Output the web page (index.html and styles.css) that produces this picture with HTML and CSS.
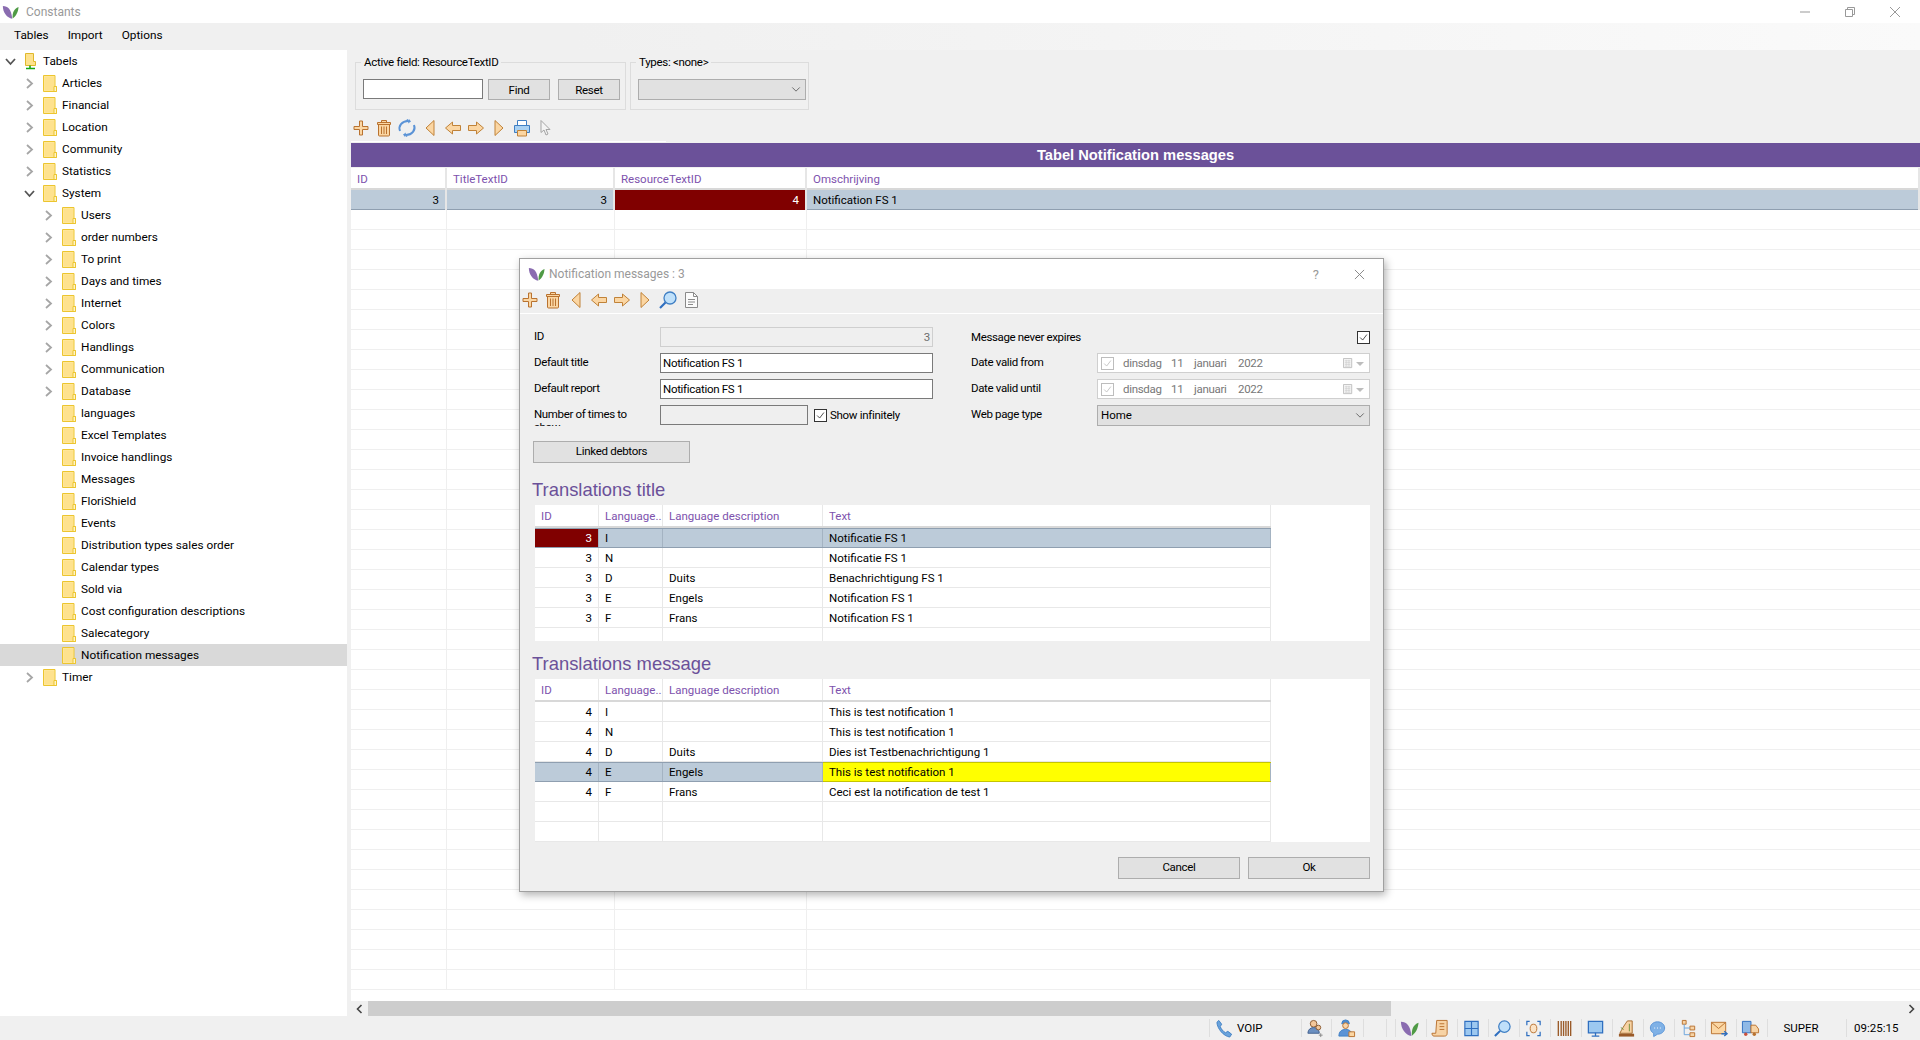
FILE: index.html
```html
<!DOCTYPE html>
<html lang="en">
<head>
    <meta charset="UTF-8">
    <title>Constants</title>
    <link rel="stylesheet" href="styles.css">
</head>
<body>
    <!-- icon sheet -->
    <svg class="sprite" width="0" height="0">
        <symbol id="leaf" viewBox="0 0 20 16">
            <path d="M1 1c6 0 10 4 11 15C6 15 1 9 1 1z" fill="#8a6cb0"/>
            <path d="M19.500 2c-.5 6-3 11-7 13.500C12 9 14 4 19.500 2z" fill="#4f9a45"/>
        </symbol>
        <symbol id="folder" viewBox="0 0 14 17">
            <path d="M.5.5h11.5v11h1.5v5H.5z" fill="#ffe9a0" stroke="#ecc52f"/>
            <path d="M1.5 1.5h9.5v14H1.5z" fill="#fee28e"/>
            <path d="M11 11.5h2.5v5H11z" fill="#fff4c8" stroke="#ecc52f"/>
        </symbol>
        <symbol id="root" viewBox="0 0 11 17">
            <path d="M.5.5h8v8h2v4H.5z" fill="#fee28e" stroke="#e0b92c"/>
            <path d="M5 12.5V15M1 15.5h9" stroke="#16a716" stroke-width="1.6" fill="none"/>
        </symbol>
        <symbol id="chev-r" viewBox="0 0 13 13">
            <path d="M4 2l5 4.5L4 11" fill="none" stroke="#a6a6a6" stroke-width="1.8"/>
        </symbol>
        <symbol id="chev-d" viewBox="0 0 13 13">
            <path d="M2 4l4.500 5L11 4" fill="none" stroke="#555" stroke-width="1.8"/>
        </symbol>
        <symbol id="plus" viewBox="0 0 20 20">
            <path d="M8.500 3h3v5.500H17v3h-5.500V17h-3v-5.500H3v-3h5.500z" fill="#fbd6a3" stroke="#b9722f"/>
        </symbol>
        <symbol id="trash" viewBox="0 0 20 20">
            <path d="M7.500 4V2.500h5V4M3.500 4.500h13v2h-13zM4.500 6.500h11V17a1 1 0 0 1-1 1h-9a1 1 0 0 1-1-1z" fill="#fbd6a3" stroke="#b9722f"/>
            <path d="M7.500 8.500V16M10 8.500V16M12.500 8.500V16" stroke="#b9722f"/>
        </symbol>
        <symbol id="tri-l" viewBox="0 0 20 20">
            <path d="M14 2.500v15L6 10z" fill="#fbd6a3" stroke="#c08238"/>
        </symbol>
        <symbol id="tri-r" viewBox="0 0 20 20">
            <path d="M6 2.500v15l8-7.500z" fill="#fbd6a3" stroke="#c08238"/>
        </symbol>
        <symbol id="arrow-l" viewBox="0 0 20 20">
            <path d="M2.500 10L9.500 4v3.500h8v5h-8V16z" fill="#fbd6a3" stroke="#c08238"/>
        </symbol>
        <symbol id="arrow-r" viewBox="0 0 20 20">
            <path d="M17.500 10l-7-6v3.500h-8v5h8V16z" fill="#fbd6a3" stroke="#c08238"/>
        </symbol>
        <symbol id="refresh" viewBox="0 0 20 20">
            <path d="M3 13C1 8 5 3 11 3l-1-1.500M17 7c2 5-2 10-8 10l1 1.500" fill="none" stroke="#5b93d6" stroke-width="2"/>
            <path d="M12 1l2 2.500-3 2zM8 19l-2-2.500 3-2z" fill="#5b93d6"/>
        </symbol>
        <symbol id="print" viewBox="0 0 20 20">
            <path d="M5.500 2.500h9v5h-9z" fill="#fff" stroke="#3f7fc4"/>
            <path d="M2.500 7.500h15v7h-15z" fill="#a9d1f3" stroke="#3f7fc4"/>
            <path d="M5.500 12.500h9v5.500h-9z" fill="#fbd6a3" stroke="#c08238"/>
        </symbol>
        <symbol id="cursor" viewBox="0 0 20 20">
            <path d="M6 2.500v12l3-2.500 2 5 2-1-2-4.500h4z" fill="#f4f4f4" stroke="#a5a5a5"/>
        </symbol>
        <symbol id="mag" viewBox="0 0 20 20">
            <circle cx="12" cy="8" r="6" fill="#bfe0fa" stroke="#3f7fc4" stroke-width="1.300"/>
            <path d="M7.500 12.500L2 18" stroke="#2f6fc0" stroke-width="2.200"/>
        </symbol>
        <symbol id="doc" viewBox="0 0 20 20">
            <path d="M4.500 2.500h8l4 4v11h-12z" fill="#fbfbfb" stroke="#8a8a8a"/>
            <path d="M12.500 2.500v4h4M7 9.500h7M7 12h7M7 14.500h5" fill="none" stroke="#8a8a8a"/>
        </symbol>
        <symbol id="phone" viewBox="0 0 20 20">
            <path d="M4 1.500l3 4-1.500 2.500c1 2.500 3 5 5.500 6.500l2.500-1.500 4 3-2 3C9 18 2.500 10.500 2 3.500z" fill="#6aa3dc" stroke="#3f7fc4"/>
        </symbol>
        <symbol id="users" viewBox="0 0 20 20">
            <circle cx="8" cy="5" r="3.500" fill="#f3c79a" stroke="#8a5a30"/>
            <path d="M2 15c0-4 3-6 6-6s6 2 6 6z" fill="#6b8fc0" stroke="#44628f"/>
            <circle cx="13" cy="9" r="2.500" fill="#f3c79a" stroke="#8a5a30"/>
            <path d="M15.500 15v4M13.500 17h4" stroke="#888"/>
        </symbol>
        <symbol id="worker" viewBox="0 0 20 20">
            <path d="M5 5a4 4 0 0 1 8 0z" fill="#4f8bcc" stroke="#3f7fc4"/>
            <circle cx="9" cy="7" r="3" fill="#f7d5ab" stroke="#b9722f"/>
            <path d="M2 18c0-5 3-7 7-7s7 2 7 7z" fill="#5b93d6" stroke="#3f7fc4"/>
            <path d="M12.500 13.500h6v5h-6z" fill="#fbd6a3" stroke="#b9722f"/>
        </symbol>
        <symbol id="scroll" viewBox="0 0 20 20">
            <path d="M6 1.500h11V15c0 2-1 3-3 3H3c-1.500 0-2-2-2-3h4z" fill="#f7d3a5" stroke="#b9722f"/>
            <path d="M9 5h5M9 8h5M9 11h5" stroke="#b9722f"/>
        </symbol>
        <symbol id="grid" viewBox="0 0 20 20">
            <path d="M3 2.500h14v15H3z" fill="#9cc8f0" stroke="#2f6fc0" stroke-width="1.200"/>
            <path d="M10 2.500v15M3 10h14" stroke="#2f6fc0" stroke-width="1.200"/>
        </symbol>
        <symbol id="face" viewBox="0 0 20 20">
            <path d="M6 2.500H3v4M14 2.500h3v4M3 13.500v4h3M17 13.500v4h-3" fill="none" stroke="#2f6fc0" stroke-width="1.300"/>
            <ellipse cx="10" cy="10" rx="3.500" ry="4.500" fill="#fbe3c6" stroke="#b9722f"/>
        </symbol>
        <symbol id="barcode" viewBox="0 0 20 20">
            <path d="M3.500 2v16M6.500 2v16M9 2v16M11.500 2v16M14 2v16M16.500 2v16" stroke="#9a5a28" stroke-width="1.400"/>
        </symbol>
        <symbol id="monitor" viewBox="0 0 20 20">
            <path d="M2.500 2.500h15v12h-15z" fill="#9cc8f0" stroke="#2f6fc0" stroke-width="1.300"/>
            <path d="M10 14.500v3M6 18h8" stroke="#2f6fc0" stroke-width="1.400"/>
        </symbol>
        <symbol id="organ" viewBox="0 0 20 20">
            <path d="M3 15C5 11 8 6 11 2h5v13z" fill="#f7d3a5" stroke="#a56a2c"/>
            <path d="M2 15.500h16v3H2z" fill="#9a5a28"/>
            <path d="M4 9l3 2M13 5v8" stroke="#6f8f3a"/>
        </symbol>
        <symbol id="chat" viewBox="0 0 20 20">
            <path d="M10 3c4 0 7.500 2.500 7.500 6.500S14 16 10 16l-4 2.500V15c-2-1-3.500-3-3.500-5.500C2.500 5.500 6 3 10 3z" fill="#7fb1e6" stroke="#5b93d6"/>
            <path d="M6.500 9.500h1M9.500 9.500h1M12.500 9.500h1" stroke="#fff"/>
        </symbol>
        <symbol id="tree" viewBox="0 0 20 20">
            <path d="M3.500 1.500h4v4h-4zM11.500 7.500h5v4h-5zM11.500 14.500h5v4h-5z" fill="#f7d3a5" stroke="#b9722f"/>
            <path d="M5.500 5.500V16.500h6M5.500 9.500h6" fill="none" stroke="#6aa3dc"/>
        </symbol>
        <symbol id="mail" viewBox="0 0 20 20">
            <path d="M1.500 3.500h15v12h-15z" fill="#fbd6a3" stroke="#b9722f"/>
            <path d="M1.500 3.500L9 10l7.500-6.500" fill="none" stroke="#b9722f"/>
            <path d="M12 15.500h5M15 13l3 2.500-3 2.500" fill="none" stroke="#2f6fc0" stroke-width="1.400"/>
        </symbol>
        <symbol id="truck" viewBox="0 0 20 20">
            <path d="M1.500 2.500h9v12h-9z" fill="#8fb9e6" stroke="#2f6fc0"/>
            <path d="M10.500 6.500h5l3 4v4h-8z" fill="#f7d3a5" stroke="#b9722f"/>
            <circle cx="5" cy="16" r="1.800" fill="#c9503c"/>
            <circle cx="14" cy="16" r="1.800" fill="#b9722f"/>
        </symbol>
        <symbol id="cal" viewBox="0 0 12 12">
            <path d="M.5.500h9v10h-9z" fill="#f4f4f4" stroke="#bdbdbd"/>
            <path d="M2 3h6M2 5h6M2 7h6M2 9h6M3.500 2v7M6.500 2v7" stroke="#cfcfcf" stroke-width=".7"/>
        </symbol>
        <symbol id="check" viewBox="0 0 13 13">
            <path d="M2.500 6.500l3 3 5-6.500" fill="none" stroke="currentColor"/>
        </symbol>
        <symbol id="caret" viewBox="0 0 12 8">
            <path d="M1.500 1.500L6 6l4.500-4.500" fill="none" stroke="#555"/>
        </symbol>
    </svg>

    <div class="app">
        <div class="titlebar">
            <svg class="app-logo"><use href="#leaf"/></svg>
            <span class="app-title">Constants</span>
            <div class="win-buttons">
                <svg class="win-btn" viewBox="0 0 12 12"><path d="M1 6h10" stroke="#999"/></svg>
                <svg class="win-btn" viewBox="0 0 12 12"><path d="M1.500 3.500h7v7h-7zM3.500 3.500v-2h7v7h-2" fill="none" stroke="#999"/></svg>
                <svg class="win-btn" viewBox="0 0 12 12"><path d="M1 1l10 10M11 1L1 11" stroke="#999"/></svg>
            </div>
        </div>
        <div class="menubar">
            <span>Tables</span>
            <span>Import</span>
            <span>Options</span>
        </div>

        <div class="main">
            <div class="tree">
                <div class="tree-row lvl0"><svg class="chev"><use href="#chev-d"/></svg><svg class="root-icon"><use href="#root"/></svg><span>Tabels</span></div>
                <div class="tree-row lvl1"><svg class="chev"><use href="#chev-r"/></svg><svg class="folder"><use href="#folder"/></svg><span>Articles</span></div>
                <div class="tree-row lvl1"><svg class="chev"><use href="#chev-r"/></svg><svg class="folder"><use href="#folder"/></svg><span>Financial</span></div>
                <div class="tree-row lvl1"><svg class="chev"><use href="#chev-r"/></svg><svg class="folder"><use href="#folder"/></svg><span>Location</span></div>
                <div class="tree-row lvl1"><svg class="chev"><use href="#chev-r"/></svg><svg class="folder"><use href="#folder"/></svg><span>Community</span></div>
                <div class="tree-row lvl1"><svg class="chev"><use href="#chev-r"/></svg><svg class="folder"><use href="#folder"/></svg><span>Statistics</span></div>
                <div class="tree-row lvl1"><svg class="chev"><use href="#chev-d"/></svg><svg class="folder"><use href="#folder"/></svg><span>System</span></div>
                <div class="tree-row lvl2"><svg class="chev"><use href="#chev-r"/></svg><svg class="folder"><use href="#folder"/></svg><span>Users</span></div>
                <div class="tree-row lvl2"><svg class="chev"><use href="#chev-r"/></svg><svg class="folder"><use href="#folder"/></svg><span>order numbers</span></div>
                <div class="tree-row lvl2"><svg class="chev"><use href="#chev-r"/></svg><svg class="folder"><use href="#folder"/></svg><span>To print</span></div>
                <div class="tree-row lvl2"><svg class="chev"><use href="#chev-r"/></svg><svg class="folder"><use href="#folder"/></svg><span>Days and times</span></div>
                <div class="tree-row lvl2"><svg class="chev"><use href="#chev-r"/></svg><svg class="folder"><use href="#folder"/></svg><span>Internet</span></div>
                <div class="tree-row lvl2"><svg class="chev"><use href="#chev-r"/></svg><svg class="folder"><use href="#folder"/></svg><span>Colors</span></div>
                <div class="tree-row lvl2"><svg class="chev"><use href="#chev-r"/></svg><svg class="folder"><use href="#folder"/></svg><span>Handlings</span></div>
                <div class="tree-row lvl2"><svg class="chev"><use href="#chev-r"/></svg><svg class="folder"><use href="#folder"/></svg><span>Communication</span></div>
                <div class="tree-row lvl2"><svg class="chev"><use href="#chev-r"/></svg><svg class="folder"><use href="#folder"/></svg><span>Database</span></div>
                <div class="tree-row lvl2"><i class="chev"></i><svg class="folder"><use href="#folder"/></svg><span>languages</span></div>
                <div class="tree-row lvl2"><i class="chev"></i><svg class="folder"><use href="#folder"/></svg><span>Excel Templates</span></div>
                <div class="tree-row lvl2"><i class="chev"></i><svg class="folder"><use href="#folder"/></svg><span>Invoice handlings</span></div>
                <div class="tree-row lvl2"><i class="chev"></i><svg class="folder"><use href="#folder"/></svg><span>Messages</span></div>
                <div class="tree-row lvl2"><i class="chev"></i><svg class="folder"><use href="#folder"/></svg><span>FloriShield</span></div>
                <div class="tree-row lvl2"><i class="chev"></i><svg class="folder"><use href="#folder"/></svg><span>Events</span></div>
                <div class="tree-row lvl2"><i class="chev"></i><svg class="folder"><use href="#folder"/></svg><span>Distribution types sales order</span></div>
                <div class="tree-row lvl2"><i class="chev"></i><svg class="folder"><use href="#folder"/></svg><span>Calendar types</span></div>
                <div class="tree-row lvl2"><i class="chev"></i><svg class="folder"><use href="#folder"/></svg><span>Sold via</span></div>
                <div class="tree-row lvl2"><i class="chev"></i><svg class="folder"><use href="#folder"/></svg><span>Cost configuration descriptions</span></div>
                <div class="tree-row lvl2"><i class="chev"></i><svg class="folder"><use href="#folder"/></svg><span>Salecategory</span></div>
                <div class="tree-row lvl2 selected"><i class="chev"></i><svg class="folder"><use href="#folder"/></svg><span>Notification messages</span></div>
                <div class="tree-row lvl1"><svg class="chev"><use href="#chev-r"/></svg><svg class="folder"><use href="#folder"/></svg><span>Timer</span></div>
            </div>

            <div class="content">
                <div class="filters">
                    <fieldset class="filter-box field-box">
                        <legend>Active field: ResourceTextID</legend>
                        <input class="text-input find-input" type="text">
                        <button class="btn find-btn">Find</button>
                        <button class="btn find-btn">Reset</button>
                    </fieldset>
                    <fieldset class="filter-box types-box">
                        <legend>Types: &lt;none&gt;</legend>
                        <div class="combo types-combo"><span></span><svg class="caret"><use href="#caret"/></svg></div>
                    </fieldset>
                </div>

                <div class="toolbar main-toolbar">
                    <svg class="tool"><use href="#plus"/></svg>
                    <svg class="tool"><use href="#trash"/></svg>
                    <svg class="tool"><use href="#refresh"/></svg>
                    <svg class="tool"><use href="#tri-l"/></svg>
                    <svg class="tool"><use href="#arrow-l"/></svg>
                    <svg class="tool"><use href="#arrow-r"/></svg>
                    <svg class="tool"><use href="#tri-r"/></svg>
                    <svg class="tool"><use href="#print"/></svg>
                    <svg class="tool"><use href="#cursor"/></svg>
                </div>
                <div class="toolbar-edge"></div>

                <div class="table-title">Tabel Notification messages</div>
                <div class="main-grid">
                    <div class="mg-row mg-head">
                        <div>ID</div><div>TitleTextID</div><div>ResourceTextID</div><div>Omschrijving</div>
                    </div>
                    <div class="mg-row mg-selected">
                        <div class="num">3</div><div class="num">3</div><div class="num active-cell">4</div><div>Notification FS 1</div>
                    </div>
                    <div class="mg-fill"></div>
                </div>
                <div class="hscroll">
                    <svg class="scroll-arrow" viewBox="0 0 8 10"><path d="M6 1L2 5l4 4" fill="none" stroke="#444" stroke-width="1.600"/></svg>
                    <div class="scroll-track"><div class="scroll-thumb"></div></div>
                    <svg class="scroll-arrow" viewBox="0 0 8 10"><path d="M2 1l4 4-4 4" fill="none" stroke="#444" stroke-width="1.600"/></svg>
                </div>
            </div>
        </div>

        <div class="statusbar">
            <div class="st-cell st-voip"><svg class="st-icon"><use href="#phone"/></svg><span>VOIP</span></div>
            <div class="st-cell st-30"><svg class="st-icon"><use href="#users"/></svg></div>
            <div class="st-cell st-32"><svg class="st-icon"><use href="#worker"/></svg></div>
            <div class="st-cell st-23"></div>
            <div class="st-cell st-9"></div>
            <div class="st-cell"><svg class="st-icon"><use href="#leaf"/></svg></div>
            <div class="st-cell"><svg class="st-icon"><use href="#scroll"/></svg></div>
            <div class="st-cell"><svg class="st-icon"><use href="#grid"/></svg></div>
            <div class="st-cell"><svg class="st-icon"><use href="#mag"/></svg></div>
            <div class="st-cell"><svg class="st-icon"><use href="#face"/></svg></div>
            <div class="st-cell"><svg class="st-icon"><use href="#barcode"/></svg></div>
            <div class="st-cell"><svg class="st-icon"><use href="#monitor"/></svg></div>
            <div class="st-cell"><svg class="st-icon"><use href="#organ"/></svg></div>
            <div class="st-cell"><svg class="st-icon"><use href="#chat"/></svg></div>
            <div class="st-cell"><svg class="st-icon"><use href="#tree"/></svg></div>
            <div class="st-cell"><svg class="st-icon"><use href="#mail"/></svg></div>
            <div class="st-cell"><svg class="st-icon"><use href="#truck"/></svg></div>
            <div class="st-cell st-user">SUPER</div>
            <div class="st-cell st-time">09:25:15</div>
        </div>
    </div>

    <!-- Notification dialog -->
    <div class="dialog">
        <div class="dlg-title">
            <svg class="app-logo"><use href="#leaf"/></svg>
            <span class="dlg-caption">Notification messages : 3</span>
            <span class="dlg-help">?</span>
            <svg class="dlg-close" viewBox="0 0 12 12"><path d="M1 1l10 10M11 1L1 11" stroke="#808080"/></svg>
        </div>
        <div class="toolbar dlg-toolbar">
            <svg class="tool"><use href="#plus"/></svg>
            <svg class="tool"><use href="#trash"/></svg>
            <svg class="tool"><use href="#tri-l"/></svg>
            <svg class="tool"><use href="#arrow-l"/></svg>
            <svg class="tool"><use href="#arrow-r"/></svg>
            <svg class="tool"><use href="#tri-r"/></svg>
            <svg class="tool"><use href="#mag"/></svg>
            <svg class="tool"><use href="#doc"/></svg>
        </div>

        <div class="dlg-body">
            <div class="form-grid">
                <label>ID</label>
                <div class="text-input disabled num-input">3</div>
                <i></i>
                <label class="never-label">Message never expires</label>
                <div class="never-cell"><span class="checkbox"><svg><use href="#check"/></svg></span></div>

                <label>Default title</label>
                <div class="text-input">Notification FS 1</div>
                <i></i>
                <label>Date valid from</label>
                <div class="date-input">
                    <span class="checkbox off"><svg><use href="#check"/></svg></span>
                    <span class="d-day">dinsdag</span><span class="d-num">11</span><span class="d-month">januari</span><span>2022</span>
                    <svg class="cal"><use href="#cal"/></svg><span class="date-drop"></span>
                </div>

                <label>Default report</label>
                <div class="text-input">Notification FS 1</div>
                <i></i>
                <label>Date valid until</label>
                <div class="date-input">
                    <span class="checkbox off"><svg><use href="#check"/></svg></span>
                    <span class="d-day">dinsdag</span><span class="d-num">11</span><span class="d-month">januari</span><span>2022</span>
                    <svg class="cal"><use href="#cal"/></svg><span class="date-drop"></span>
                </div>

                <label class="clipped">Number of times to show</label>
                <div class="times-cell">
                    <div class="text-input times-input"></div>
                    <span class="checkbox"><svg><use href="#check"/></svg></span>
                    <span>Show infinitely</span>
                </div>
                <i></i>
                <label>Web page type</label>
                <div class="combo"><span>Home</span><svg class="caret"><use href="#caret"/></svg></div>
            </div>

            <button class="btn linked-btn">Linked debtors</button>

            <h2 class="section-title">Translations title</h2>
            <div class="sub-grid grid-title">
                <div class="sg-row sg-head"><div>ID</div><div>Language..</div><div>Language description</div><div>Text</div></div>
                <div class="sg-row sg-selected"><div class="num active-cell">3</div><div>I</div><div></div><div>Notificatie FS 1</div></div>
                <div class="sg-row"><div class="num">3</div><div>N</div><div></div><div>Notificatie FS 1</div></div>
                <div class="sg-row"><div class="num">3</div><div>D</div><div>Duits</div><div>Benachrichtigung FS 1</div></div>
                <div class="sg-row"><div class="num">3</div><div>E</div><div>Engels</div><div>Notification FS 1</div></div>
                <div class="sg-row"><div class="num">3</div><div>F</div><div>Frans</div><div>Notification FS 1</div></div>
                <div class="sg-row"><div></div><div></div><div></div><div></div></div>
            </div>

            <h2 class="section-title second">Translations message</h2>
            <div class="sub-grid grid-message">
                <div class="sg-row sg-head"><div>ID</div><div>Language..</div><div>Language description</div><div>Text</div></div>
                <div class="sg-row"><div class="num">4</div><div>I</div><div></div><div>This is test notification 1</div></div>
                <div class="sg-row"><div class="num">4</div><div>N</div><div></div><div>This is test notification 1</div></div>
                <div class="sg-row"><div class="num">4</div><div>D</div><div>Duits</div><div>Dies ist Testbenachrichtigung 1</div></div>
                <div class="sg-row sg-selected"><div class="num">4</div><div>E</div><div>Engels</div><div class="yellow-cell">This is test notification 1</div></div>
                <div class="sg-row"><div class="num">4</div><div>F</div><div>Frans</div><div>Ceci est la notification de test 1</div></div>
                <div class="sg-row"><div></div><div></div><div></div><div></div></div>
                <div class="sg-row"><div></div><div></div><div></div><div></div></div>
            </div>

            <div class="dlg-actions">
                <button class="btn action-btn">Cancel</button>
                <button class="btn action-btn">Ok</button>
            </div>
        </div>
    </div>
</body>
</html>
```

FILE: styles.css
```css
* {
    box-sizing: border-box;
}
html, body {
    margin: 0;
    height: 100%;
    overflow: hidden;
}
body {
    font-family: Roboto, "Open Sans", sans-serif;
    font-size: 12px;
    color: #000;
    background: #fff;
}
.sprite {
    position: absolute;
}
.app {
    height: 1040px;
    display: flex;
    flex-direction: column;
}

/* title + menu */
.titlebar {
    height: 23px;
    display: flex;
    align-items: center;
    padding-left: 2px;
    background: #fff;
}
.app-logo {
    width: 17px;
    height: 14px;
}
.app-title {
    margin-left: 7px;
    color: #999;
}
.win-buttons {
    margin-left: auto;
    display: flex;
    gap: 33px;
    padding-right: 19px;
}
.win-btn {
    width: 12px;
    height: 12px;
}
.menubar {
    height: 27px;
    display: flex;
    align-items: center;
    gap: 19px;
    padding: 0 0 3px 14px;
    font-size: 11.800px;
    background: linear-gradient(to right, #f0f0f0 0, #f0f0f0 30%, #fafafa 100%);
}

.main {
    flex: 1;
    display: flex;
    min-height: 0;
}

/* tree */
.tree {
    width: 347px;
    background: #fff;
    font-size: 11.800px;
}
.tree-row {
    height: 22px;
    display: flex;
    align-items: center;
}
.tree-row.selected {
    background: #d9d9d9;
}
.lvl0 { padding-left: 4px; }
.lvl1 { padding-left: 23px; }
.lvl2 { padding-left: 42px; }
.chev {
    width: 13px;
    height: 13px;
    flex: none;
    margin-right: 7px;
}
.lvl0 .chev {
    margin-right: 8px;
}
.folder {
    width: 14px;
    height: 17px;
    margin-right: 5px;
}
.root-icon {
    width: 11px;
    height: 17px;
    margin-right: 7px;
}

/* right side */
.content {
    flex: 1;
    min-width: 0;
    display: flex;
    flex-direction: column;
    padding-left: 4px;
    background: #f0f0f0;
}
.filters {
    height: 61px;
    display: flex;
    gap: 4px;
    padding: 4px 0 0 4px;
}
.filter-box {
    margin: 0;
    height: 56px;
    padding: 9px 0 0 7px;
    border: 1px solid #dcdcdc;
    display: flex;
    letter-spacing: -.3px;
}
.filter-box legend {
    padding: 0 3px;
    margin-left: -2px;
    line-height: 16px;
    font-size: 11.500px;
}
.field-box {
    width: 271px;
}
.types-box {
    width: 179px;
}
.text-input {
    height: 20px;
    border: 1px solid #7a7a7a;
    background: #fff;
    padding: 0 2px;
    font: 11.500px/18px Roboto, sans-serif;
    letter-spacing: -.3px;
}
.find-input {
    width: 120px;
    margin: 0 5px 0 0;
}
.btn {
    height: 21px;
    padding: 0;
    border: 1px solid #adadad;
    background: #e1e1e1;
    font: 11.500px Roboto, sans-serif;
    letter-spacing: -.3px;
    color: #000;
}
.find-btn {
    width: 62px;
}
.find-btn + .find-btn {
    margin-left: 8px;
}
.combo {
    height: 21px;
    border: 1px solid #adadad;
    background: #e1e1e1;
    display: flex;
    align-items: center;
    justify-content: space-between;
    padding: 0 4px 0 3px;
    font-size: 11.500px;
}
.types-combo {
    width: 168px;
}
.caret {
    width: 10px;
    height: 7px;
}

.toolbar {
    display: flex;
    gap: 3px;
    align-items: center;
}
.tool {
    width: 20px;
    height: 20px;
}
.main-toolbar {
    height: 24px;
    margin: 5px 0 1px;
}
.toolbar-edge {
    width: 315px;
    height: 1px;
    margin-bottom: 1px;
    background: #fff;
}

.table-title {
    height: 24px;
    text-align: center;
    background: #6b5199;
    color: #fff;
    font: bold 14.700px/25px "Liberation Sans", sans-serif;
}

/* main table */
.main-grid {
    flex: 1;
    min-height: 0;
    display: flex;
    flex-direction: column;
    background: #fff;
    margin-top: 1px;
    font-size: 11.500px;
}
.mg-row {
    display: grid;
    grid-template-columns: 96px 168px 192px 1fr;
}
.mg-row > div {
    padding: 0 6px;
    border-right: 2px solid #e6e6e6;
    white-space: nowrap;
}
.mg-head {
    height: 22px;
    line-height: 22px;
    color: #7d52ad;
    border-bottom: 2px solid #d8d8d8;
}
.mg-selected {
    height: 20px;
    line-height: 20px;
    background: #bccbd9;
    border-bottom: 1px solid #8f9fb0;
}
.num {
    text-align: right;
}
.active-cell {
    background: #800000;
    color: #fff;
}
.mg-fill {
    height: 780px;
    background:
        linear-gradient(#efefef, #efefef) 95px 0 / 1px 100% no-repeat,
        linear-gradient(#efefef, #efefef) 263px 0 / 1px 100% no-repeat,
        linear-gradient(#efefef, #efefef) 455px 0 / 1px 100% no-repeat,
        repeating-linear-gradient(#fff 0, #fff 19px, #efefef 19px, #efefef 20px);
}
.hscroll {
    height: 15px;
    flex: none;
    display: flex;
    align-items: center;
    background: #f0f0f0;
}
.scroll-arrow {
    width: 17px;
    height: 10px;
    flex: none;
}
.scroll-track {
    flex: 1;
    height: 15px;
}
.scroll-thumb {
    width: 1023px;
    height: 15px;
    background: #cdcdcd;
}

/* status bar */
.statusbar {
    height: 24px;
    flex: none;
    display: flex;
    justify-content: flex-end;
    align-items: center;
    background: #f0f0f0;
    font-size: 11.500px;
}
.st-cell {
    width: 31px;
    height: 18px;
    display: flex;
    align-items: center;
    justify-content: center;
    flex: none;
    padding-right: 3px;
    border-left: 1px solid #dedede;
}
.st-icon {
    width: 19px;
    height: 19px;
    flex: none;
}
.st-voip {
    width: 92px;
    justify-content: flex-start;
    padding-left: 5px;
    gap: 3px;
}
.st-30 { width: 30px; }
.st-32 { width: 32px; }
.st-23 { width: 23px; }
.st-9 { width: 9px; }
.st-user { width: 79px; padding-right: 12px; }
.st-time { width: 74px; justify-content: flex-start; padding-left: 7px; }

/* dialog */
.dialog {
    position: absolute;
    left: 519px;
    top: 258px;
    width: 865px;
    height: 634px;
    background: #efefef;
    border: 1px solid #a0a0a0;
    box-shadow: 2px 3px 8px rgba(0,0,0,.3);
    font-size: 11.500px;
}
.dlg-title {
    height: 30px;
    display: flex;
    align-items: center;
    padding: 0 18px 0 8px;
    background: #fff;
}
.dlg-caption {
    margin-left: 4px;
    color: #999;
    font-size: 12px;
}
.dlg-help {
    margin-left: auto;
    margin-right: 35px;
    color: #999;
    font-size: 13px;
}
.dlg-close {
    width: 11px;
    height: 11px;
}
.dlg-toolbar {
    height: 25px;
    padding-bottom: 2px;
    border-bottom: 1px solid #fff;
}
.dlg-body {
    padding: 13px 13px 0 14px;
}
.form-grid {
    display: grid;
    grid-template-columns: 126px 273px 38px 126px 273px;
    grid-auto-rows: 20px;
    row-gap: 6px;
    align-items: center;
}
.form-grid label {
    line-height: 15px;
    padding-bottom: 2px;
    letter-spacing: -.35px;
}
.form-grid .never-label {
    padding-bottom: 0;
}
.form-grid .clipped {
    display: block;
    align-self: start;
    width: 100px;
    height: 21px;
    overflow: hidden;
    padding: 3px 0 0;
    line-height: 13px;
}
.disabled {
    border-color: #cfcfcf;
    background: #efefef;
    color: #6d6d6d;
}
.num-input {
    text-align: right;
}
.never-cell {
    display: flex;
    justify-content: flex-end;
}
.checkbox {
    width: 13px;
    height: 13px;
    display: block;
    flex: none;
    border: 1px solid #333;
    background: #fff;
    color: #333;
}
.checkbox svg {
    display: block;
    width: 11px;
    height: 11px;
}
.checkbox.off {
    border-color: #bdbdbd;
    color: #bdbdbd;
}
.times-cell {
    display: flex;
    align-items: center;
    white-space: nowrap;
    letter-spacing: -.3px;
}
.times-input {
    width: 148px;
    flex: none;
    background: #efefef;
    margin-right: 6px;
}
.times-cell span:last-child {
    margin-left: 3px;
}
.date-input {
    height: 20px;
    display: flex;
    align-items: center;
    border: 1px solid #cfcfcf;
    background: #fff;
    padding-left: 3px;
    color: #777;
    letter-spacing: -.3px;
}
.d-day { margin-left: 9px; width: 48px; }
.d-num { width: 23px; }
.d-month { width: 44px; }
.cal {
    width: 11px;
    height: 11px;
    margin-left: auto;
}
.date-drop {
    margin: 1px 5px 0 2px;
    border-left: 4px solid transparent;
    border-right: 4px solid transparent;
    border-top: 4px solid #bdbdbd;
}
.linked-btn {
    display: block;
    width: 157px;
    height: 22px;
    margin: 16px 0 0 -1px;
    padding-bottom: 2px;
}
.section-title {
    margin: 17px 0 0 -2px;
    height: 22px;
    font: normal 18.400px/20px "Liberation Sans", sans-serif;
    color: #6b5199;
}
.section-title.second {
    margin-top: 13px;
}

/* small grids in the dialog */
.sub-grid {
    width: 835px;
    margin: 3px 0 0 1px;
    background: #fff;
    overflow: hidden;
}
.grid-title { height: 136px; }
.grid-message { height: 163px; }
.sg-row {
    width: 736px;
    height: 20px;
    display: grid;
    grid-template-columns: 64px 64px 160px 448px;
    line-height: 20px;
    border-bottom: 1px solid #e8e8e8;
}
.sg-row > div {
    padding: 0 6px;
    border-right: 1px solid #e8e8e8;
    white-space: nowrap;
    overflow: hidden;
}
.sg-head {
    height: 23px;
    line-height: 22px;
    color: #7d52ad;
    border-bottom: 2px solid #d8d8d8;
}
.sg-selected {
    background: #bccbd9;
    border-top: 1px solid #8f9fb0;
    border-bottom: 1px solid #8f9fb0;
    line-height: 18px;
}
.sg-selected > div {
    border-right-color: #a4b3c2;
}
.yellow-cell {
    background: #ffff00;
    box-shadow: 0 1px 0 #c5c500, 0 -1px 0 #c5c500;
}
.dlg-actions {
    display: flex;
    justify-content: flex-end;
    gap: 8px;
    margin: 15px 0 0;
    width: 836px;
}
.action-btn {
    width: 122px;
    height: 22px;
    padding-bottom: 2px;
}
```
